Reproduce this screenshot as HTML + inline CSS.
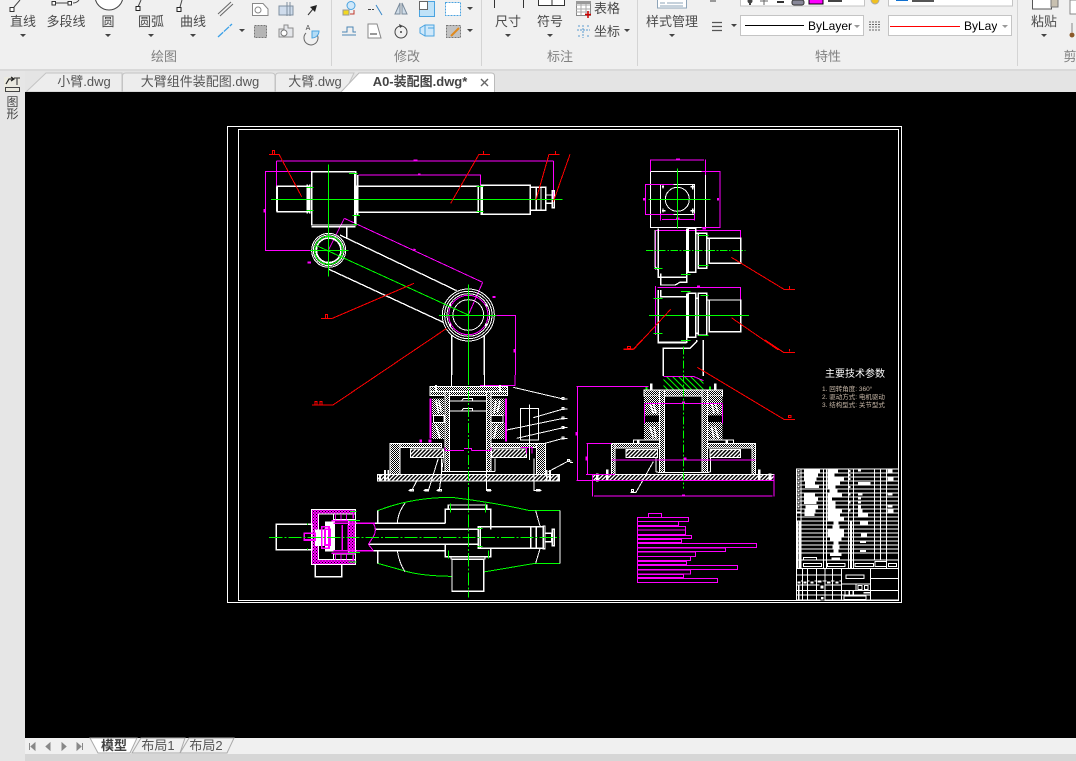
<!DOCTYPE html>
<html><head><meta charset="utf-8"><style>
html,body{margin:0;padding:0;width:1076px;height:761px;overflow:hidden;background:#f0f0f0}
svg{display:block}
text{font-family:"Liberation Sans","Noto Sans CJK SC",sans-serif}
.r{font-size:13px;fill:#4a4a4a;text-anchor:middle}
.p{font-size:13px;fill:#808080;text-anchor:middle}
.t{font-size:13px;fill:#555;text-anchor:middle}
.d{fill:#444}
.i{fill:none;stroke:#555;stroke-width:1}
.b{fill:#cfe8fa;stroke:#4aa3e0;stroke-width:1}
.c{shape-rendering:crispEdges;fill:none;stroke-width:3}
.w{stroke:#fff}.m{stroke:#f0f}.g{stroke:#0f0}.e{stroke:#f00}
.da{stroke-dasharray:30 6 6 6}
</style></head><body>
<svg width="1076" height="761" viewBox="0 0 1076 761" xmlns="http://www.w3.org/2000/svg">
<defs>
<pattern id="dw" width="6" height="6" patternUnits="userSpaceOnUse"><rect width="6" height="6" fill="#000"/><rect width="3" height="3" fill="#fff"/><rect x="3" y="3" width="3" height="3" fill="#fff"/></pattern>
<pattern id="dm" width="9" height="9" patternUnits="userSpaceOnUse"><rect width="9" height="9" fill="#f0f"/><rect width="3" height="3" fill="#000"/><rect x="4.500" y="4.500" width="3" height="3" fill="#000"/></pattern>
<pattern id="hw" width="12" height="12" patternUnits="userSpaceOnUse"><rect width="12" height="12" fill="#000"/><path d="M0,12L12,0M-3,3L3,-3M9,15L15,9" stroke="#fff" stroke-width="4"/></pattern>
<pattern id="hg" width="18" height="18" patternUnits="userSpaceOnUse"><rect width="18" height="18" fill="#000"/><path d="M0,0L18,18M-9,9L9,27M9,-9L27,9" stroke="#0f0" stroke-width="3"/></pattern>
<clipPath id="cb"><rect x="960" y="15" width="37" height="22"/></clipPath>
</defs>

<!-- ribbon -->
<rect width="1076" height="69" fill="#f0f0f0"/>
<rect y="69" width="1076" height="2" fill="#d9d9d9"/>
<rect y="71" width="1076" height="22" fill="#e4e4e4"/>
<path d="M331.500,0V66M481.500,0V66M637.500,0V66M1017.500,0V66" stroke="#d4d4d4"/>

<g class="r">
<text x="23" y="26" class="r">直线</text><text x="66" y="26" class="r">多段线</text><text x="108" y="26" class="r">圆</text><text x="151" y="26" class="r">圆弧</text><text x="193" y="26" class="r">曲线</text>
<text x="508" y="26" class="r">尺寸</text><text x="550" y="26" class="r">符号</text><text x="672" y="26" class="r">样式管理</text><text x="1044" y="26" class="r">粘贴</text>
<text x="607" y="13" class="r">表格</text><text x="607" y="36" class="r">坐标</text>
</g>
<text x="164" y="61" class="p">绘图</text><text x="407" y="61" class="p">修改</text><text x="560" y="61" class="p">标注</text><text x="828" y="61" class="p">特性</text><text x="1070" y="61" class="p">剪</text>
<!-- dropdowns -->
<g class="d">
<path d="M20,34h6l-3,3zM105,34h6l-3,3zM148,34h6l-3,3zM190,34h6l-3,3zM239,29h6l-3,3zM467,7h6l-3,3zM467,29h6l-3,3zM505,34h6l-3,3zM547,34h6l-3,3zM624,29h6l-3,3zM669,34h6l-3,3zM731,24h6l-3,3zM1041,34h6l-3,3z"/>
</g>
<!-- draw icons -->
<g class="i" stroke="#444">
<path d="M14,7L20,0" stroke="#444"/><rect x="10" y="7.500" width="4" height="4" fill="#fff" stroke="#333"/>
<path d="M56,3H69M73,3Q77,3 79,0" stroke="#444"/><rect x="52" y="1.500" width="3.500" height="3.500" fill="#fff" stroke="#333"/><rect x="68" y="1.500" width="3.500" height="3.500" fill="#fff" stroke="#333"/>
<circle cx="109" cy="-4" r="14" fill="#fff" stroke="#444"/>
<path d="M138,7L141,0" stroke="#444"/><rect x="136" y="6.500" width="4" height="4" fill="#fff" stroke="#222"/>
<path d="M180,7L182,0" stroke="#444"/><rect x="177" y="7.500" width="4" height="4" fill="#fff" stroke="#222"/>
<path d="M218,14L231,2M220,16L233,4" stroke="#666"/>
</g>
<path d="M218,37L232,24" stroke="#3aa0e8" stroke-width="1.300" stroke-dasharray="7 1"/>
<path d="M252.500,3.500H263L268,9V15.500H252.500Z" fill="#fff" stroke="#888"/><circle cx="258" cy="10" r="3" fill="none" stroke="#888"/>
<path d="M279,6H293V15H279Z" fill="#cfdcec" stroke="#7f8fa0"/><path d="M287,2V16M290,2V16" stroke="#7f8fa0"/>
<path d="M308,15L313,9" stroke="#333"/><path d="M310,7L317,5L315,12Z" fill="#222"/>
<rect x="254.500" y="25.500" width="12" height="12" fill="#b5b5b5" stroke="#777" stroke-dasharray="2 1"/>
<path d="M279,29h5v-4h4v3h5v9h-14z" fill="#e4e6ea" stroke="#8c8c8c"/><circle cx="284" cy="33" r="3" fill="#fff" stroke="#777"/>
<path d="M312,31A7,7 0 1 1 306,33" fill="none" stroke="#666"/><path d="M312,31H319A7,7 0 0 1 312,38Z" fill="#b3dcf6" stroke="#4aa3e0"/>
<text x="308" y="30" font-size="7" fill="#444" text-anchor="middle">A</text>
<!-- modify -->
<rect x="343" y="10" width="6" height="5" fill="#f2d820" stroke="#999"/><circle cx="351" cy="5.500" r="4" fill="#cfe8fa" stroke="#4aa3e0"/><path d="M350,14H354V10" fill="none" stroke="#c0392b"/>
<path d="M368,9.500H374" stroke="#444" stroke-dasharray="3 1"/><path d="M376,5L382,15" stroke="#3a88c8"/>
<path d="M400,3L395,14H400ZM402,3L407,14H402Z" fill="#cfdce8" stroke="#7a8a9a"/>
<rect x="419.500" y="1.500" width="15" height="15" fill="#bfe2f8" stroke="#4aa3e0"/><rect x="419.500" y="1.500" width="8" height="8" fill="#fff" stroke="#666"/>
<rect x="445.500" y="2.500" width="15" height="13" fill="#fff" stroke="#4aa3e0" stroke-dasharray="2 1"/>
<path d="M342,35H356M342,32H347V27H353V32H356" fill="none" stroke="#4c86b4"/>
<path d="M368,24H377L381,38H368Z" fill="#fff" stroke="#888"/><path d="M370,34H377" stroke="#333"/>
<circle cx="401" cy="32" r="6" fill="none" stroke="#444"/><circle cx="401" cy="32" r="1" fill="#444"/><path d="M399,24L403,26L400,28" fill="#444"/>
<path d="M420,28L425,25H434V36H425L420,33Z" fill="#cfe8fa" stroke="#4aa3e0"/><path d="M425,25V36M428,28H434" stroke="#4aa3e0"/>
<rect x="446.500" y="25.500" width="14" height="12" fill="#c2c2c2" stroke="#777" stroke-dasharray="2 1"/><path d="M451,36L459,28" stroke="#e08a1e" stroke-width="2"/>
<!-- dim icons -->
<path d="M494.500,0V8M523.500,0V8" stroke="#333"/>
<path d="M538.500,-1V5.500H564.500V-1M552,0V5" fill="#fff" stroke="#333"/>
<rect x="576.500" y="1.500" width="14" height="14" fill="#fff" stroke="#8a8a8a"/><path d="M576,5H590M576,9H590M576,12H590M581,2V15M586,2V15" stroke="#aaa"/><rect x="576" y="1" width="15" height="3" fill="#999"/><path d="M588,11V18M585,14.500H591" stroke="#c00" stroke-width="1.500"/>
<path d="M577,30H590M583,25V38M578,26H580M587,26H589M578,36H580M587,36H589" stroke="#5d9bd0" stroke-dasharray="2 1"/>
<!-- style -->
<rect x="657.500" y="-2" width="29" height="10" fill="#fff" stroke="#8ea4b8"/><path d="M660,3H665M667,3H683M660,6H683" stroke="#8ea4b8"/>
<rect x="710" y="0" width="6" height="2" fill="#999"/>
<path d="M712,22.500H722M712,26.500H722M712,30.500H722" stroke="#555" stroke-width="1.200"/>
<!-- combos -->
<rect x="740.500" y="-4" width="124" height="10" fill="#fff" stroke="#c4c4c4"/>
<rect x="888.500" y="-4" width="124" height="10" fill="#fff" stroke="#c4c4c4"/>
<circle cx="750" cy="1" r="2.500" fill="#444"/><rect x="749" y="3" width="2" height="2" fill="#444"/>
<path d="M760,1H768M764,-3V5" stroke="#666"/><rect x="777" y="1" width="7" height="2" fill="#333"/>
<rect x="792" y="0" width="12" height="5" rx="2" fill="#889" stroke="#333"/><rect x="809" y="-1" width="14" height="5" fill="#f0f" stroke="#000"/>
<rect x="828" y="0" width="14" height="2" fill="#444"/>
<circle cx="875" cy="0" r="4" fill="#f0c020" stroke="#aaa"/><rect x="896" y="-1" width="12" height="2" fill="#1070d0"/><rect x="912" y="0" width="22" height="2" fill="#555"/>
<rect x="740.500" y="15.500" width="123" height="20" fill="#fff" stroke="#c4c4c4"/>
<rect x="888.500" y="15.500" width="123" height="20" fill="#fff" stroke="#c4c4c4"/>
<rect x="745" y="25" width="59" height="1" fill="#000"/>
<rect x="890" y="26" width="70" height="1" fill="#f00"/>
<text x="808" y="30" font-size="12" fill="#000">ByLayer</text>
<text x="964" y="30" font-size="12" fill="#000" clip-path="url(#cb)">ByLayer</text>
<path d="M854,25h6l-3,3zM1002,25h6l-3,3z" fill="#999"/>
<path d="M869,22H881M869,27H881M869,30H881M869,24.500H881" stroke="#666" stroke-dasharray="2 1"/>
<!-- paste -->
<rect x="1032.500" y="-3" width="19" height="12" fill="#fff" stroke="#555"/><rect x="1051" y="-2" width="7" height="9" fill="#c8c0b0" stroke="#777"/>
<rect x="1070" y="0" width="8" height="14" fill="#fff" stroke="#888"/><path d="M1072,23V32" stroke="#888"/><circle cx="1072" cy="35" r="2.500" fill="#8a5a2a"/>

<!-- tabs -->
<path d="M26,92L46,73H122V92Z" fill="#ededed" stroke="#c4c4c4"/>
<path d="M122.500,92V76Q122.500,73 126,73H271Q275,73 275,76V92Z" fill="#ededed" stroke="#c4c4c4"/>
<path d="M275.500,92V76Q275.500,73 279,73H354L345,92Z" fill="#ededed" stroke="#c4c4c4"/>
<path d="M340,93L359,73H491Q494.500,73 494.500,76V93Z" fill="#fff" stroke="#bbb"/>
<text x="84" y="86" class="t">小臂.dwg</text>
<text x="200" y="86" class="t">大臂组件装配图.dwg</text>
<text x="315" y="86" class="t">大臂.dwg</text>
<text x="420" y="86" text-anchor="middle" font-size="13" font-weight="bold" fill="#444">A0-装配图.dwg*</text>
<path d="M481,79L488,86M488,79L481,86" stroke="#666" stroke-width="1.400"/>
<!-- left panel -->
<rect x="0" y="71" width="25" height="690" fill="#e6e6e6"/>
<rect x="4" y="77" width="17" height="44" fill="#e6e6e6"/>
<rect x="4" y="77" width="16" height="15" fill="#ebeadf"/>
<path d="M6,84L9,79H13M11,77L14,79L11,81" fill="none" stroke="#222" stroke-width="1.200"/><path d="M14,78H20M17,78V85" stroke="#555" stroke-width="1.300"/>
<rect x="5.500" y="87.500" width="14" height="4" fill="none" stroke="#444"/>
<text x="12.500" y="106" font-size="12" text-anchor="middle" fill="#444">图</text>
<text x="12.500" y="118" font-size="12" text-anchor="middle" fill="#444">形</text>

<!-- canvas -->
<rect x="25" y="92" width="1051" height="646" fill="#000"/>
<!-- bottom -->
<rect x="25" y="738" width="1051" height="16" fill="#f0f0f0"/>
<rect x="25" y="754" width="1051" height="7" fill="#d6d6d6"/>
<path d="M29.500,743V750M35,743V750L31,746.500ZM50,743V750L46,746.500ZM62,743V750L66,746.500ZM77,743V750L81,746.500ZM82.500,743V750" fill="#888" stroke="#888"/>
<path d="M90,738H137L130,753H98Z" fill="#fff" stroke="#aaa"/>
<path d="M132,753L141,738H185L180,753Z" fill="#f0f0f0" stroke="#aaa"/>
<path d="M180,753L189,738H234L227,753Z" fill="#f0f0f0" stroke="#aaa"/>
<text x="114" y="750" text-anchor="middle" font-size="13" font-weight="bold" fill="#444">模型</text>
<text x="158" y="750" class="t">布局1</text>
<text x="206" y="750" class="t">布局2</text>

<!-- frame -->
<g class="c">
<g transform="translate(225,125) scale(.33333)">
<rect x="8" y="4" width="2022" height="1428" class="w"/>
<rect x="41" y="13" width="1979" height="1413" class="w"/>
</g>

<!-- main side view -->
<g transform="translate(225,125) scale(.33333)">
<path class="m" d="M155,108H985M155,108V185M985,108V225M400,150H767V180M397,150V222M262,140H122V376H310M358,280L773,472M358,280L310,376M773,472L730,570M775,572H872V750"/>
<path class="m" d="M119,252V262M868,672V682M565,106H578M579,148H587M248,413H258M802,516H812M565,373L572,376" stroke-width="6"/>
<path class="w" stroke-width="4" d="M156,184H250V260H156ZM260,140H392V300H260ZM397,184H760V262H397ZM768,181H916V268H768ZM916,187H962V256H916ZM962,210H982V235H962ZM982,197H988V248H982ZM934,187V256M948,187V256M772,181V268"/>
<path class="w" d="M156,184V260M247,178V265M254,178V265M390,147V295M398,150V270" stroke-width="5"/>
<path class="w" stroke-width="4" d="M260,305H392M365,305V342M345,330L695,497M310,432L655,592M680,630V750M778,630V750"/>
<circle class="w" cx="311" cy="376" r="51"/><circle class="w" cx="311" cy="376" r="46"/><circle class="g" cx="311" cy="376" r="42"/><circle class="w" cx="311" cy="376" r="37" stroke-width="5"/>
<circle class="w" cx="730" cy="570" r="78"/><circle class="w" cx="730" cy="570" r="71"/><circle class="w" cx="730" cy="570" r="64"/><circle class="m" cx="730" cy="570" r="59"/><circle class="w" cx="730" cy="570" r="46"/>
<path class="w" d="M672,540h6M782,540h6M672,600h6M780,600h6" stroke-width="8"/>
<path class="g" d="M138,223H1013M311,118V455M255,376H370M275,362L730,570M730,478V750M642,571H815M372,145H398M385,298H398M382,271H405M245,187H265M245,257H265M755,184H775M755,260H775"/>
<path class="e" d="M132,88H162L230,215M795,88H762L677,235M1003,88H972L933,225M1035,88L985,230M288,580H322L567,475M324,840L665,610M324,840H261"/>
<path class="e" d="M142,76H149V88H142ZM775,78V88M991,78V88M301,568H308V580H301ZM270,830H276V840H270ZM285,830H291V840H285Z"/>
</g>

<!-- bottom base main -->
<g transform="translate(370,375) scale(.33333)">
<path class="m" d="M435,0V32H330"/>
<path class="w" d="M244,0V35M343,0V35"/>
<rect x="22" y="298" width="546" height="20" fill="url(#hw)" class="w"/>
<rect x="60" y="205" width="30" height="93" fill="url(#dw)" class="w"/>
<rect x="90" y="205" width="125" height="13" fill="url(#dw)" class="w"/>
<rect x="500" y="205" width="27" height="93" fill="url(#dw)" class="w"/>
<rect x="365" y="205" width="135" height="13" fill="url(#dw)" class="w"/>
<rect x="122" y="222" width="98" height="26" fill="url(#hw)" class="w"/>
<rect x="365" y="222" width="105" height="26" fill="url(#hw)" class="w"/>
<rect x="180" y="35" width="232" height="27" fill="url(#dw)" class="w"/>
<rect x="225" y="50" width="13" height="240" fill="url(#dw)" class="w"/>
<rect x="350" y="50" width="13" height="240" fill="url(#dw)" class="w"/>
<rect x="186" y="70" width="36" height="52" fill="url(#dw)"/><rect x="186" y="142" width="36" height="50" fill="url(#dw)"/>
<rect x="365" y="70" width="38" height="52" fill="url(#dw)"/><rect x="365" y="142" width="38" height="50" fill="url(#dw)"/>
<path d="M198,76L206,115M206,76L214,110M198,150L210,190M378,78L372,115M390,78L382,112M380,150L372,190" stroke="#fff" stroke-width="5"/>
<path class="w" d="M215,290H375M238,78H350M238,108H350M275,78L280,70H308V78M275,108L280,100H308V108M215,250V290M375,250V290M178,50H412"/>
<rect x="190" y="122" width="32" height="20" fill="#000" class="w"/><rect x="363" y="122" width="36" height="20" fill="#000" class="w"/>
<path class="m" d="M182,70V190M408,70V200" stroke-width="6"/>
<path class="m" d="M225,226H282M304,226H363M282,220H304V226M225,218V226M363,218V226M452,218H486V236M470,218V236"/>
<path class="m" d="M148,198H156M176,198H184" stroke-width="8"/>
<path class="w" d="M451,100H505V195H451ZM478,88V255M430,37L580,72H592M490,128L580,102H592M410,165L580,130H592M440,190L580,158H592M525,205L580,190H592M535,290L595,258H605M492,250V347H515M140,318L125,347H115M205,250L175,347H160M220,250L208,347H200M350,250V347H365"/>
<path class="w" d="M576,68h6v6h-6zM576,98h6v6h-6zM576,126h6v6h-6zM576,154h6v6h-6zM576,186h6v6h-6zM592,254h6v6h-6zM120,343h10v5h-10zM165,343h10v5h-10zM204,343h10v5h-10zM352,343h10v5h-10zM500,343h10v5h-10z"/>
<path class="w" d="M45,285V318M55,285V318M540,285V318M530,285V318M198,30V50M390,30V50M30,298V318M565,298V318" stroke-width="5"/>
<path class="g da" d="M295,0V375"/>
</g>

<!-- plan view -->
<g transform="translate(265,490) scale(.33333)">
<path class="g" d="M338,62Q440,22 560,22Q690,38 790,61H885M338,220L420,243Q470,258 560,259M656,246L810,220H885"/>
<rect x="140" y="58" width="132" height="166" fill="url(#dm)" class="w"/>
<rect x="160" y="72" width="90" height="136" fill="#000" class="w"/>
<path d="M205,72H272V88H205ZM205,192H272V208H205Z" fill="#000" stroke="#fff"/>
<path class="w" d="M34,103H140V179H34Z" stroke-width="5"/>
<path class="w" stroke-width="4" d="M151,224V260H230V224M272,100H540M272,182H540M330,118H640M310,163H640M541,100V58H677V118M541,163V200H677V176M561,208H656V304H561ZM640,110H835V175H640ZM835,108H840V176H835ZM840,130H860V155H840ZM862,118H868V167H862ZM885,62V220M338,62V100M338,182V220M550,58V45H665V58M558,200V208M660,200V208M797,110V175M814,110V175M646,110V175"/>
<path class="w" d="M420,40Q400,65 397,98M397,183Q403,220 420,245M812,62L825,108M825,176L812,220"/>
<path d="M180,95h30v90h-30z" fill="#fff"/><path d="M150,118h30v50h-30z" fill="#fff"/>
<path class="m" d="M118,130H150V150H118ZM170,110H192V175H170ZM180,118H195V165H180ZM232,105V182M250,105V182M205,100H272M205,182H272M200,92H272M200,190H272M265,70V85M265,195V212M275,100H330M275,182H325" stroke-width="5"/>
<path class="m" d="M325,100Q337,120 325,140L310,163L325,182"/>
<path class="m" d="M212,72V88M228,72V88M245,72V88M212,192V208M228,192V208M245,192V208"/>
<path class="g" d="M255,64H275M250,92H285M250,188H285M250,216H275M128,100V105M128,175V180M556,40V68M661,40V68M670,182V205M550,182V205M638,115H652M638,170H652"/>
<path class="g" d="M12,142H885M610,15V322" stroke-dasharray="40 6 6 6"/>
</g>

<!-- right elev upper -->
<g transform="translate(570,150) scale(.33333)">
<path class="w" d="M241,65H406V232H241ZM271,103H373V193H271Z"/>
<circle class="w" cx="322" cy="148" r="36"/>
<path class="m" d="M241,30H402M241,28V65M406,28V75M395,65H450V232H395M310,103H226V193H310M271,190V212M373,190V212M276,208H373M258,241H511V340M256,241V360M262,412H511V500M256,408V555"/>
<path class="m" d="M318,29H330M444,144V152M222,144V152M318,205H328M398,236H408M381,410H390" stroke-width="6"/>
<path class="w" d="M276,110h6M362,110h12M276,182h10M362,182h12M279,105v10M368,105v14M279,176v12M368,176v14" stroke-width="4"/>
<path class="w" stroke-width="4" d="M265,235V382H350V235M255,240V350L265,360M355,235H377V367H355ZM377,250H410V355H385V250M410,265H512V340H418V265M272,370V405H315L330,397H350V382M265,420V577H350V430M272,420V440H350M355,430H377V562H355ZM385,430H410V555H385ZM378,445H385M378,550H385M410,450H512V545H418V450"/>
<path class="g" d="M322,55V235M235,148H422M237,496H537M252,355H278M333,373H362M385,256H416M385,346H416M333,424H362M392,436H416M250,445H278M250,550H278M333,571H362M385,556H416"/>
<path class="g" d="M228,301H527" stroke-dasharray="22 5 5 5"/>
<path class="e" d="M484,322L642,418H675M484,503L625,600M302,478L192,597H160M658,408V418"/>
</g>

<!-- right elev lower -->
<g transform="translate(570,340) scale(.33333)">
<path class="w" stroke-width="4" d="M280,108V25H360L380,5V0M400,0V108M265,0V8H350"/>
<path d="M280,110H370L400,122V150H280Z" fill="url(#hg)"/>
<path class="m" d="M280,109H370L400,122"/>
<path class="g" d="M230,140V150M420,140V150" stroke-width="6"/>
<rect x="222" y="150" width="236" height="18" fill="url(#dw)" class="w"/>
<rect x="222" y="168" width="46" height="58" fill="url(#dw)"/><rect x="222" y="246" width="46" height="54" fill="url(#dw)"/>
<rect x="412" y="168" width="46" height="58" fill="url(#dw)"/><rect x="412" y="246" width="46" height="54" fill="url(#dw)"/>
<path d="M240,190L250,220M250,190L258,220M240,260L250,295M252,260L258,295M425,190L432,220M435,190L445,220M425,260L432,295M435,260L445,295" stroke="#fff" stroke-width="5"/>
<rect x="124" y="310" width="144" height="14" fill="url(#dw)" class="w"/>
<rect x="124" y="310" width="11" height="93" fill="url(#dw)" class="w"/>
<rect x="412" y="310" width="144" height="14" fill="url(#dw)" class="w"/>
<rect x="546" y="310" width="10" height="93" fill="url(#dw)" class="w"/>
<rect x="168" y="328" width="94" height="24" fill="url(#hw)" class="w"/>
<rect x="420" y="328" width="92" height="24" fill="url(#hw)" class="w"/>
<rect x="268" y="150" width="16" height="248" fill="url(#dw)" class="w"/>
<rect x="396" y="150" width="16" height="248" fill="url(#dw)" class="w"/>
<rect x="68" y="403" width="544" height="18" fill="url(#hw)" class="w"/>
<path class="w" d="M270,398H410M258,352V395L268,398M422,352V395L412,398M190,310V300H268M490,310V300H412"/>
<path class="w" d="M244,130V150M436,130V150M112,388V420M568,388V420M82,400V425M600,400V420M205,298V310M470,298V310" stroke-width="8"/>
<path class="w" d="M250,365L198,457H182"/><path class="w" d="M184,448h7v7h-7z"/>
<path class="m" d="M20,139H235M22,139V421M50,310H125M52,310V403M48,403H135M20,421H612M68,403V470M612,403V470M72,468H608M124,360H556M225,190H456M224,190V250M457,190V250"/>
<path class="m" d="M19,276V286M49,350V362M336,466H345M336,188H345M340,356H350" stroke-width="6"/>
<path class="g" d="M340,20V445" stroke-dasharray="24 6 6 6"/>
<path class="e" d="M215,0L190,28H160M172,19h9v7h-9zM585,0L642,38H675M658,27v8M382,82L642,238H675M655,226h8v7h-8z"/>
<path class="w" d="M0,367H9"/>
</g>

<!-- table -->
<g transform="translate(625,505) scale(.33333)" class="m">
<path d="M70,25H110V37H70ZM37,37H190V50H37ZM37,50H160V62H37ZM37,65H181V75H37ZM37,75H181V88H37ZM37,91H199V100H37ZM37,103H170V113H37ZM37,115H394V127H37ZM37,129H302V139H37ZM37,141H211V154H37ZM37,155H196V167H37ZM37,169H184V179H37ZM37,181H337V194H37ZM37,195H196V207H37ZM37,208H175V218H37ZM37,220H277V232H37Z"/>
</g>

<!-- title block -->
<g transform="translate(790,460) scale(.33333)">
<rect x="20" y="27" width="305" height="393" class="w"/>
<path class="w" d="M20,39H325M20,51H325M20,63H325M20,75H325M20,87H325M20,99H325M20,111H325M20,123H325M20,135H325M20,147H325M20,159H325M20,171H325M20,183H325M20,195H325M20,207H325M20,219H325M20,231H325M20,243H325M20,255H325M20,267H325M20,279H325M20,300H325M20,325H325"/>
<path class="w" d="M33,27V325M100,27V325M110,27V325M175,27V325M190,27V325M253,27V300M272,27V300M290,27V325"/>
<path d="M42,29h48v8h-48zM42,41h42v8h-42zM42,53h38v8h-38zM45,65h30v8h-30zM45,77h42v7h-42zM42,101h33v8h-33zM42,113h42v8h-42zM42,124h38v8h-38zM46,137h38v8h-38zM44,149h32v8h-32zM44,160h30v8h-30z" fill="#fff"/>
<path d="M112,29h32v8h-32zM112,41h22v8h-22zM112,53h50v8h-50zM112,65h38v8h-38zM112,77h25v8h-25zM118,89h25v8h-25zM112,101h44v8h-44zM112,113h14v8h-14zM112,125h25v8h-25zM112,137h25v8h-25zM112,149h44v8h-44zM112,161h38v8h-38zM112,173h50v8h-50zM130,185h16v8h-16zM127,197h22v8h-22zM112,209h50v8h-50zM112,221h50v8h-50zM120,233h35v8h-35zM130,245h16v8h-16zM127,257h22v8h-22zM130,269h16v8h-16zM120,280h35v8h-35zM124,292h26v8h-26z" fill="#fff"/>
<path d="M204,29h9v6h-9zM204,66h38v8h-38zM204,101h14v6h-14zM204,113h9v6h-9zM204,125h9v6h-9zM204,137h9v14h-9zM204,149h14v8h-14zM204,161h30v8h-30zM210,185h24v8h-24zM213,221h18v8h-18zM210,245h18v4h-18zM210,270h18v6h-18zM293,29h14v10h-14zM293,53h18v10h-18zM293,101h14v6h-14zM293,137h14v6h-14zM293,149h18v8h-18z" fill="#fff"/>
<path d="M22,30h6v4h-6zM22,42h6v4h-6zM22,54h6v4h-6zM22,66h6v4h-6zM22,78h6v4h-6zM22,90h6v4h-6zM22,102h6v4h-6zM22,114h6v4h-6zM22,126h6v4h-6zM22,138h6v4h-6zM20,155h11v5h-11zM176,30h6v6h-6zM176,42h6v6h-6zM176,54h6v6h-6zM176,78h6v6h-6zM176,100h6v6h-6zM176,125h6v6h-6zM176,148h6v6h-6z" fill="#fff"/>
<path d="M23,185V325M29,185V325M183,185V325" stroke="#fff" stroke-width="5"/>
<path class="w" d="M40,310H95V320H40ZM112,310H165V320H112ZM195,310H250V320H195ZM295,310H320V320H295ZM255,305H290V320H255ZM40,292H80V300H40Z"/>
<path class="w" d="M20,345H155M20,363H155M20,375H155M20,392H155M20,405H155M38,325V420M52,325V420M80,325V420M105,325V420M128,325V420M155,325V420M242,325V420M242,355H325M242,392H325M155,372H242M155,392H242M155,405H242"/>
<path class="w" d="M168,345H222V356H168ZM204,377H216V388H204ZM224,377H234V388H224ZM162,408H228V418H162Z"/>
<path class="w" d="M165,392V405M178,392V405M190,392V405M198,372V392M220,398H242" stroke-width="4"/>
<path d="M22,363h10v9h-10zM40,363h10v9h-10zM60,363h12v9h-12zM82,360h14v9h-14zM110,363h12v9h-12zM135,363h12v9h-12zM90,375h12v12h-12zM92,410h10v10h-10z" fill="#fff" stroke="#000" stroke-width="2"/>
<path d="M26,375V420" stroke="#fff" stroke-width="4"/>
</g>
</g>

<!-- notes -->
<text x="855" y="377" font-size="10" fill="#fff" text-anchor="middle">主要技术参数</text>
<text x="822" y="391" font-size="6.500" fill="#c9b9a9">1. 回转角度: 360°</text>
<text x="822" y="399" font-size="6.500" fill="#c9b9a9">2. 驱动方式: 电机驱动</text>
<text x="822" y="407" font-size="6.500" fill="#c9b9a9">3. 结构型式: 关节型式</text>
</svg>
</body></html>
